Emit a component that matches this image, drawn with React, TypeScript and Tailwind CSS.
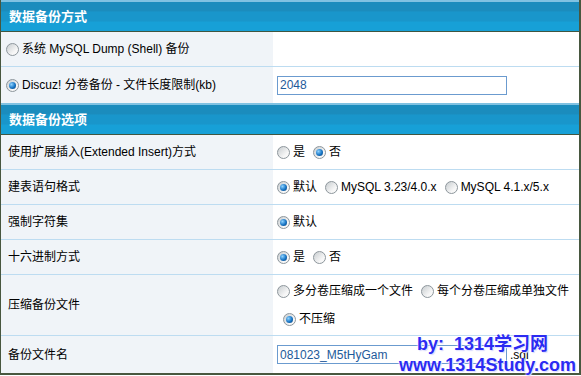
import React from 'react';

const Radio: React.FC<{ checked?: boolean }> = ({ checked }) => (
  <span className="inline-flex h-[13px] w-[13px] shrink-0 items-center justify-center rounded-full border border-[#8d969c] bg-[linear-gradient(135deg,#c8cdd0,#f7f7f7_70%)]">
    {checked && (
      <span className="h-[7px] w-[7px] rounded-full bg-[radial-gradient(circle_at_35%_35%,#8fd3ff,#1674c4_55%,#0a3a6e)]" />
    )}
  </span>
);

const Option: React.FC<{ checked?: boolean; label: string }> = ({ checked, label }) => (
  <span className="inline-flex items-center gap-[3px]">
    <Radio checked={checked} />
    <span>{label}</span>
  </span>
);

const Header: React.FC<{ title: string }> = ({ title }) => (
  <div className="flex h-[32px] items-center border-t-2 border-b border-t-[#80c2e2] border-b-[#3f5641] bg-[linear-gradient(#1b8cbd_0%,#1b8cbd_30%,#1996cb_35%,#1996cb_65%,#17a0d7_70%,#17a0d7_100%)] pl-[8px] text-[13px] font-bold text-white">
    {title}
  </div>
);

const Row: React.FC<{
  h: string;
  left: React.ReactNode;
  right?: React.ReactNode;
  last?: boolean;
  noBorder?: boolean;
}> = ({ h, left, right, noBorder }) => (
  <div className={`flex ${h} ${noBorder ? '' : 'border-b border-[#bddcf1]'}`}>
    <div className="flex w-[272px] shrink-0 items-center bg-[#f0f4f8] pl-[7px]">{left}</div>
    <div className="flex flex-1 items-center bg-white pl-[4px]">{right}</div>
  </div>
);

const App: React.FC = () => {
  return (
    <div className="relative h-[376px] w-[581px] overflow-hidden bg-white font-['Liberation_Sans','Noto_Sans_CJK_SC',sans-serif] text-[12px] text-black">
      <div className="border-b-2 border-l border-r-2 border-[#48573f]">
        <Header title="数据备份方式" />
        <Row
          h="h-[35px]"
          left={
            <span className="-ml-[2px] inline-flex items-center gap-[3px]">
              <Radio />
              <span>系统 MySQL Dump (Shell) 备份</span>
            </span>
          }
        />
        <Row
          h="h-[36px]"
          noBorder
          left={
            <span className="-ml-[2px] inline-flex items-center gap-[3px]">
              <Radio checked />
              <span>Discuz! 分卷备份 - 文件长度限制(kb)</span>
            </span>
          }
          right={
            <div className="flex h-[19px] w-[230px] items-center border border-[#6b9bcf] pl-[2px] text-[#1e5a9a]">
              2048
            </div>
          }
        />
        <Header title="数据备份选项" />
        <Row
          h="h-[35px]"
          left="使用扩展插入(Extended Insert)方式"
          right={
            <div className="flex items-center gap-[8px]">
              <Option label="是" />
              <Option checked label="否" />
            </div>
          }
        />
        <Row
          h="h-[35px]"
          left="建表语句格式"
          right={
            <div className="flex items-center gap-[8px]">
              <Option checked label="默认" />
              <Option label="MySQL 3.23/4.0.x" />
              <Option label="MySQL 4.1.x/5.x" />
            </div>
          }
        />
        <Row h="h-[35px]" left="强制字符集" right={<Option checked label="默认" />} />
        <Row
          h="h-[35px]"
          left="十六进制方式"
          right={
            <div className="flex items-center gap-[8px]">
              <Option checked label="是" />
              <Option label="否" />
            </div>
          }
        />
        <Row
          h="h-[61px]"
          left="压缩备份文件"
          right={
            <div className="flex flex-col gap-[10px]">
              <div className="flex items-center gap-[8px]">
                <Option label="多分卷压缩成一个文件" />
                <Option label="每个分卷压缩成单独文件" />
              </div>
              <div className="ml-[6px] flex items-center">
                <Option checked label="不压缩" />
              </div>
            </div>
          }
        />
        <Row
          h="h-[37px]"
          noBorder
          left="备份文件名"
          right={
            <div className="flex items-center gap-[3px]">
              <div className="flex h-[19px] w-[230px] items-center border border-[#6b9bcf] pl-[2px] text-[#1e5a9a]">
                081023_M5tHyGam
              </div>
              <span>.sql</span>
            </div>
          }
        />
      </div>
      <div className="pointer-events-none absolute left-[417px] top-[333px] text-[18px] font-bold leading-[22px] text-[#2b2bf2] [text-shadow:0_0_2px_#fff,0_0_2px_#fff,1px_1px_1px_#c8c8ff]">
        by:&nbsp; 1314学习网
      </div>
      <div className="pointer-events-none absolute left-[399px] top-[354px] text-[18px] font-bold leading-[22px] text-[#2b2bf2] [text-shadow:0_0_2px_#fff,0_0_2px_#fff,1px_1px_1px_#c8c8ff]">
        www.1314Study.com
      </div>
    </div>
  );
};

export default App;
